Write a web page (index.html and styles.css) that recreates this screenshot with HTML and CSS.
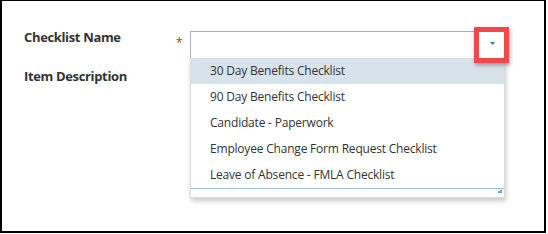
FILE: index.html
```html
<!DOCTYPE html>
<html>
<head>
<meta charset="utf-8">
<link rel="stylesheet" href="styles.css">
</head>
<body>
<div class="frame">
  <div class="form">
    <div class="row">
      <label class="label">Checklist Name</label>
      <span class="req">*</span>
      <div class="combo">
        <svg class="arrow" width="5" height="3" viewBox="0 0 5 3"><polygon points="0,0 5,0 2.5,3" fill="#2a86ad"/></svg>
        <div class="list">
          <ul class="items">
            <li class="item active">30 Day Benefits Checklist</li>
            <li class="item">90 Day Benefits Checklist</li>
            <li class="item">Candidate - Paperwork</li>
            <li class="item">Employee Change Form Request Checklist</li>
            <li class="item">Leave of Absence - FMLA Checklist</li>
          </ul>
          <div class="list-footer">
            <svg class="grip" width="4" height="3" viewBox="0 0 4 3"><rect x="2" y="0" width="2" height="1" fill="#5b9be0"/><rect x="0" y="1" width="4" height="1" fill="#7fb0e8"/><rect x="0" y="2" width="4" height="1" fill="#5b9be0"/></svg>
          </div>
        </div>
      </div>
    </div>
    <div class="row row2">
      <label class="label">Item Description</label>
    </div>
  </div>
  <div class="highlight"></div>
</div>
</body>
</html>
```
FILE: styles.css
```css
html, body {
  margin: 0;
  padding: 0;
  background: #fff;
}
.frame {
  position: relative;
  box-sizing: border-box;
  width: 546px;
  height: 233px;
  border: 2px solid #000;
  border-top-width: 1px;
  font-family: "Open Sans", "Liberation Sans", sans-serif;
  color: #333;
}
.form {
  padding: 30px 0 0 22px;
}
.row {
  display: grid;
  grid-template-columns: 152px 14px 315px;
  align-items: start;
}
.row2 {
  margin-top: 12px;
}
.label {
  font-size: 13px;
  font-weight: 700;
  line-height: 20px;
  margin-top: -4px;
  letter-spacing: -0.35px;
  color: #333;
}
.req {
  color: #e8141b;
  font-size: 12px;
  line-height: 20px;
  margin-top: 2px;
  padding-left: 0;
}
.combo {
  position: relative;
  box-sizing: border-box;
  height: 27px;
  border: 1px solid #9fb4c6;
  border-bottom: 0;
  display: flex;
  justify-content: flex-end;
  align-items: flex-start;
  padding: 10px 9px 0 0;
}
.arrow {
  display: block;
}
.list {
  position: absolute;
  top: 26px;
  left: -1px;
  width: 315px;
  box-sizing: border-box;
  background: #fff;
  border: 1px solid #dcdcdc;
  border-top: 0;
  box-shadow: 1px 3px 5px rgba(0, 0, 0, 0.22);
  z-index: 2;
}
.items {
  list-style: none;
  margin: 0;
  padding: 0;
}
.item {
  height: 26px;
  line-height: 26px;
  font-size: 12px;
  letter-spacing: -0.2px;
  padding-left: 19px;
  color: #333;
  white-space: nowrap;
}
.item.active {
  background: #d8e2ea;
}
.list-footer {
  border-top: 1px solid #a3bacd;
  display: flex;
  justify-content: flex-end;
  align-items: flex-start;
  padding: 1px 2px 0 0;
  box-sizing: border-box;
  height: 9px;
}
.grip {
  display: block;
}
.highlight {
  position: absolute;
  left: 472px;
  top: 26px;
  width: 35px;
  height: 36px;
  box-sizing: border-box;
  border: 5px solid #f2474c;
  box-shadow: 1px 2px 4px rgba(0, 0, 0, 0.35);
  z-index: 3;
}
```
